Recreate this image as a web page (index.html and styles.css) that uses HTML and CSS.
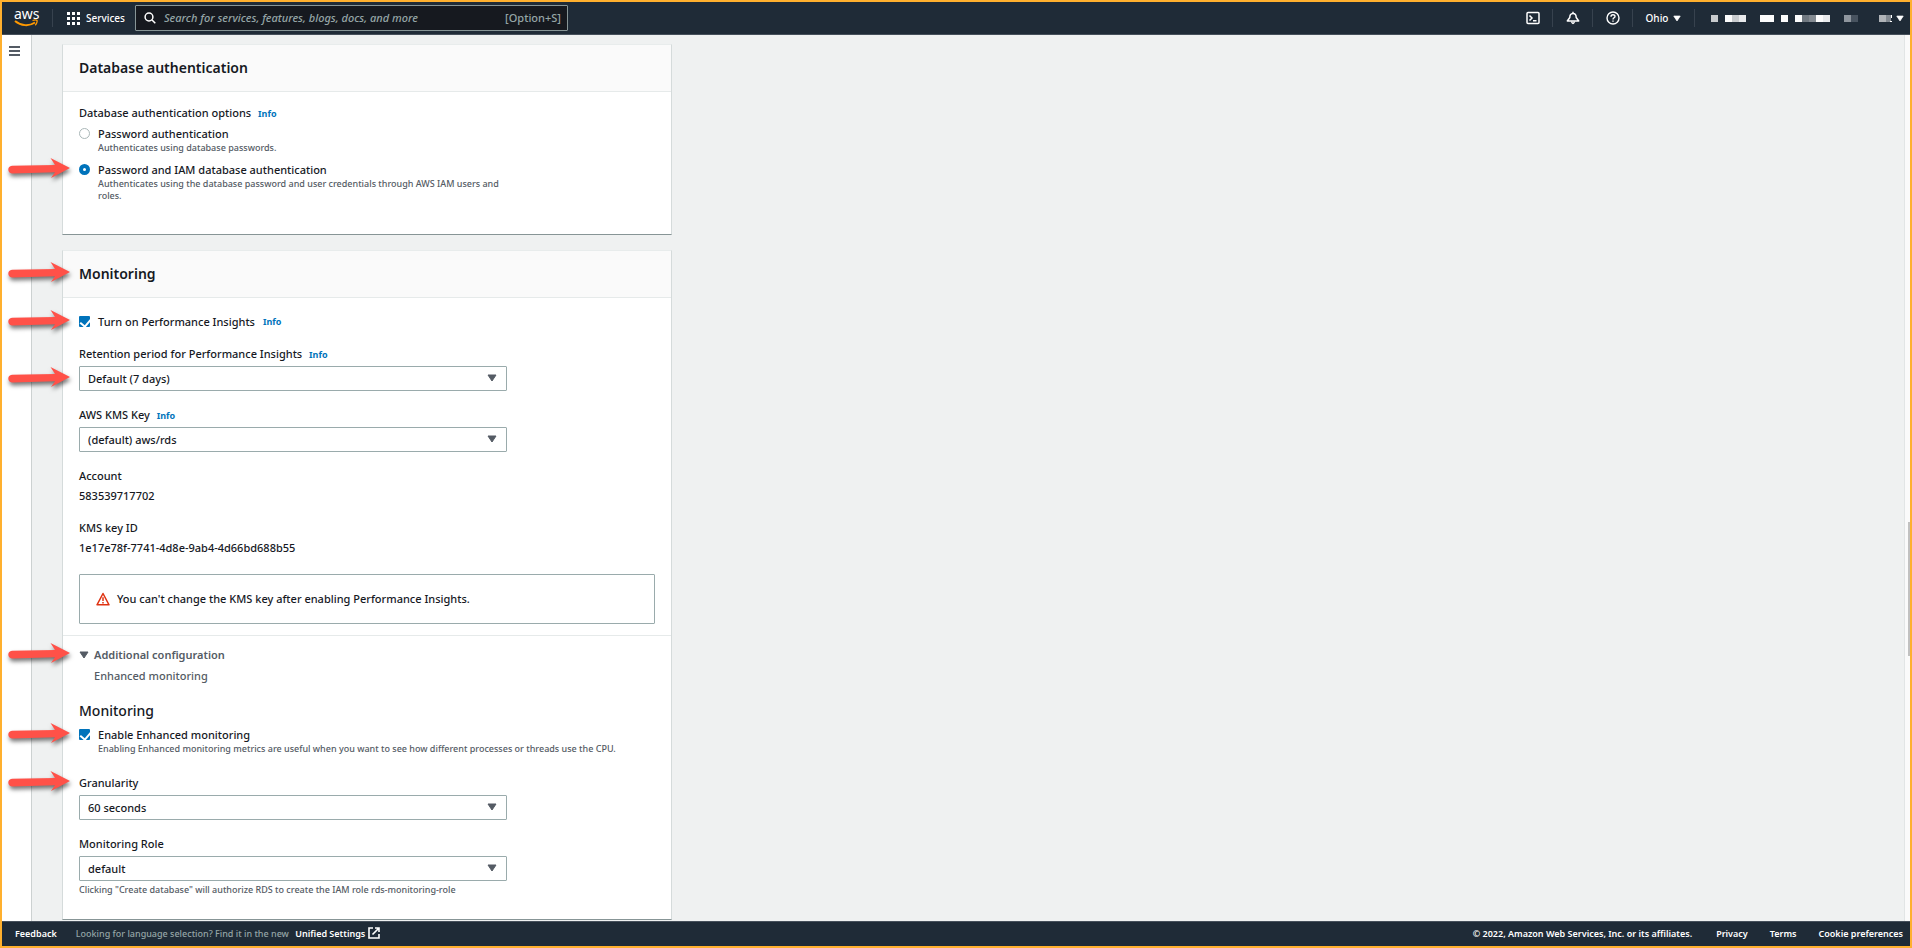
FILE: index.html
```html
<!DOCTYPE html>
<html lang="en">
<head>
<meta charset="utf-8">
<title>Create database - RDS</title>
<link rel="stylesheet" href="styles.css">
</head>
<body>
<svg class="defs" width="0" height="0" aria-hidden="true">
  <defs>
    <symbol id="arrow" viewBox="0 -1 72 32">
      <path d="M6 10.800L49 10L44.500 3L64 13L45 23L49 17.200L6 18.500Q2.300 18 2.300 14.600Q2.300 11.200 6 10.800Z" fill="#ff5148"/>
    </symbol>
    <symbol id="caret" viewBox="0 0 10 8"><path d="M1 1H9L5 7Z" fill="currentColor" stroke="currentColor" stroke-linejoin="round"/></symbol>
  </defs>
</svg>
<header class="topbar">
  <a class="logo" href="#" aria-label="AWS home">
    <span class="logo-text">aws</span>
    <svg class="logo-smile" viewBox="0 0 24 8" aria-hidden="true"><path d="M1 2C7 7 15 7.500 21 3.500" fill="none" stroke="#f90" stroke-width="2"/><path d="M18.500 1.500C20.500 .8 22.500 .8 23 1.500S22.500 5 21.200 6.300" fill="none" stroke="#f90" stroke-width="1.300"/></svg>
  </a>
  <button class="services" type="button">
    <svg width="13" height="13" viewBox="0 0 13 13" fill="#fff" aria-hidden="true"><path d="M0 0h3v3H0zM5 0h3v3H5zM10 0h3v3h-3zM0 5h3v3H0zM5 5h3v3H5zM10 5h3v3h-3zM0 10h3v3H0zM5 10h3v3H5zM10 10h3v3h-3z"/></svg>
    Services
  </button>
  <label class="search">
    <svg width="12" height="12" viewBox="0 0 12 12" fill="none" stroke="#fff" stroke-width="1.500" aria-hidden="true"><circle cx="5" cy="5" r="3.900"/><path d="M8 8L11.300 11.300"/></svg>
    <input type="search" aria-label="Search" placeholder="Search for services, features, blogs, docs, and more">
    <span>[Option+S]</span>
  </label>
  <nav class="tools">
    <button type="button" aria-label="CloudShell"><svg width="14" height="14" viewBox="0 0 14 14" fill="none" stroke="#fff" stroke-width="1.500"><rect x="1" y="1.500" width="12" height="11" rx="1"/><path d="M3.500 4.500L6 7L3.500 9.500M7 9.800H10.500"/></svg></button>
    <button type="button" aria-label="Notifications"><svg width="14" height="14" viewBox="0 0 14 14" fill="none" stroke="#fff" stroke-width="1.500" stroke-linejoin="round"><path d="M7 .8V2.500M7 2.500C4.500 2.500 3.800 4.300 3.800 6.500L1.300 10H12.700L10.200 6.500C10.200 4.300 9.500 2.500 7 2.500Z"/><path d="M5.500 10.500Q7 14.500 8.500 10.500"/></svg></button>
    <button type="button" aria-label="Help"><svg width="14" height="14" viewBox="0 0 14 14" fill="none" stroke="#fff" stroke-width="1.400"><circle cx="7" cy="7" r="6"/><path d="M5 5.700C5 3 9 3.200 9 5.400C9 6.800 7 6.800 7 8.400M7 9.400V10.800"/></svg></button>
    <button class="region" type="button">Ohio <svg width="8" height="7" aria-hidden="true"><use href="#caret"/></svg></button>
    <button class="account" type="button" aria-label="Account">
      <svg width="182" height="7" viewBox="0 0 182 7" shape-rendering="crispEdges" aria-hidden="true">
        <path fill="#fcfcfc" d="M14 0h7v7h-7zM49 0h14v7H49zM70 0h7v7h-7zM84 0h7v7h-7zM105 0h7v7h-7z"/>
        <path fill="#c8cbce" d="M0 0h7v7H0zM21 0h7v7h-7z"/><path fill="#e8eaec" d="M28 0h7v7h-7zM112 0h7v7h-7z"/>
        <path fill="#707880" d="M91 0h7v7h-7z"/><path fill="#838a91" d="M98 0h7v7h-7zM175 0h5v7h-5z"/>
        <path fill="#8f969e" d="M133 0h7v7h-7z"/><path fill="#48535f" d="M140 0h7v7h-7z"/><path fill="#b0b4b8" d="M168 0h7v7h-7z"/><path fill="#fff" d="M180 0h1v3h-1zM179 6h2v1h-2z"/>
      </svg>
      <svg width="8" height="7" aria-hidden="true"><use href="#caret"/></svg>
    </button>
  </nav>
</header>
<div class="shell">
  <aside class="rail">
    <button type="button" aria-label="Open navigation"><svg width="11" height="10" viewBox="0 0 11 10" stroke="#545b64" stroke-width="2"><path d="M0 1H11M0 5H11M0 9H11"/></svg></button>
  </aside>
  <main class="content">
    <section class="card auth">
      <header class="card-head"><h2>Database authentication</h2></header>
      <fieldset class="card-body">
        <legend class="field-label">Database authentication options <a href="#">Info</a></legend>
        <div class="choice">
          <input type="radio" name="auth" id="auth-pw">
          <label for="auth-pw">Password authentication<small>Authenticates using database passwords.</small></label>
        </div>
        <div class="choice">
          <svg class="arrow line" aria-hidden="true"><use href="#arrow"/></svg>
          <input type="radio" name="auth" id="auth-iam" checked>
          <label for="auth-iam">Password and IAM database authentication<small>Authenticates using the database password and user credentials through AWS IAM users and roles.</small></label>
        </div>
      </fieldset>
    </section>
    <section class="card">
      <header class="card-head"><svg class="arrow" aria-hidden="true"><use href="#arrow"/></svg><h2>Monitoring</h2></header>
      <div class="card-body monitoring">
        <div class="choice">
          <svg class="arrow line" aria-hidden="true"><use href="#arrow"/></svg>
          <input type="checkbox" id="insights" checked>
          <label for="insights">Turn on Performance Insights</label>
          <a href="#">Info</a>
        </div>
        <div class="field">
          <div class="field-label"><label for="retention">Retention period for Performance Insights</label> <a href="#">Info</a></div>
          <div class="select"><svg class="arrow" aria-hidden="true"><use href="#arrow"/></svg><select id="retention"><option>Default (7 days)</option></select><svg class="caret" aria-hidden="true"><use href="#caret"/></svg></div>
        </div>
        <div class="field">
          <div class="field-label"><label for="kms">AWS KMS Key</label> <a href="#">Info</a></div>
          <div class="select"><select id="kms"><option>(default) aws/rds</option></select><svg class="caret" aria-hidden="true"><use href="#caret"/></svg></div>
        </div>
        <dl class="facts">
          <div><dt>Account</dt><dd>583539717702</dd></div>
          <div><dt>KMS key ID</dt><dd>1e17e78f-7741-4d8e-9ab4-4d66bd688b55</dd></div>
        </dl>
        <div class="alert">
          <svg width="14" height="14" viewBox="0 0 14 14" fill="none" stroke="#df3312" stroke-width="1.500" aria-hidden="true"><path d="M7 1.500L13 12.800H1Z" stroke-linejoin="round"/><path d="M7 5.300V9M7 10V11.500"/></svg>
          You can't change the KMS key after enabling Performance Insights.
        </div>
      </div>
      <div class="extra">
        <div class="extra-head">
          <button type="button" aria-expanded="true"><svg class="arrow" aria-hidden="true"><use href="#arrow"/></svg><svg class="caret" aria-hidden="true"><use href="#caret"/></svg>Additional configuration</button>
          <p>Enhanced monitoring</p>
        </div>
        <h3>Monitoring</h3>
        <div class="choice">
          <svg class="arrow line" aria-hidden="true"><use href="#arrow"/></svg>
          <input type="checkbox" id="enhanced" checked>
          <label for="enhanced">Enable Enhanced monitoring<small>Enabling Enhanced monitoring metrics are useful when you want to see how different processes or threads use the CPU.</small></label>
        </div>
        <div class="field">
          <div class="field-label"><svg class="arrow" aria-hidden="true"><use href="#arrow"/></svg><label for="granularity">Granularity</label></div>
          <div class="select"><select id="granularity"><option>60 seconds</option></select><svg class="caret" aria-hidden="true"><use href="#caret"/></svg></div>
        </div>
        <div class="field">
          <div class="field-label"><label for="role">Monitoring Role</label></div>
          <div class="select"><select id="role"><option>default</option></select><svg class="caret" aria-hidden="true"><use href="#caret"/></svg></div>
          <small class="hint">Clicking "Create database" will authorize RDS to create the IAM role rds-monitoring-role</small>
        </div>
      </div>
    </section>
  </main>
  <div class="track"><div class="thumb"></div></div>
</div>
<footer class="footer">
  <a href="#">Feedback</a>
  <span class="language">Looking for language selection? Find it in the new <a href="#">Unified Settings<svg width="12" height="12" viewBox="0 0 12 12" fill="none" stroke="#fff" stroke-width="1.600" aria-hidden="true"><path d="M5 1H1V11H11V7M7 1H11V5M11 1L4.500 7.500"/></svg></a></span>
  <span class="copyright">© 2022, Amazon Web Services, Inc. or its affiliates.</span>
  <a href="#">Privacy</a>
  <a href="#">Terms</a>
  <a href="#">Cookie preferences</a>
</footer>
</body>
</html>
```
FILE: styles.css
```css
* { box-sizing: border-box; }
body {
  margin: 0;
  height: 100vh;
  display: flex;
  flex-direction: column;
  border: 2px solid #ffb02e;
  background: #eff1f1;
  color: #16191f;
  font: 500 11px/16px "Noto Sans", sans-serif;
  overflow: hidden;
}
h2, h3, p, dl, dd, fieldset { margin: 0; }
button, input, select { font: inherit; color: inherit; }
button { border: 0; background: none; padding: 0; cursor: pointer; }
a { color: #0073bb; text-decoration: none; }
small { display: block; color: #545b64; font-size: 9px; line-height: 12px; }
.defs { position: absolute; }

.topbar {
  flex: none;
  display: flex;
  align-items: center;
  height: 33px;
  background: #1f2b37;
  border-bottom: 1px solid #46505b;
  color: #fff;
}
.logo { width: 51px; padding-left: 12px; border-right: 1px solid #37424e; height: 18px; display: flex; flex-direction: column; }
.logo-text { color: #fff; font-size: 14px; font-weight: 400; line-height: 10px; }
.logo-smile { width: 24px; height: 8px; }
.services { display: flex; align-items: center; gap: 6px; margin-left: 14px; font-size: 10px; font-weight: 500; }
.search {
  display: flex;
  align-items: center;
  gap: 8px;
  width: 433px;
  height: 26px;
  margin-left: 10px;
  padding: 0 6px 0 8px;
  border: 1px solid #879596;
  border-radius: 1px;
  background: #16191f;
  color: #95a5a6;
}
.search input { flex: 1; border: 0; padding: 0; background: none; outline: 0; }
.search input::placeholder { color: #95a5a6; font-style: italic; opacity: 1; }
.tools { margin-left: auto; display: flex; align-items: center; }
.tools button { display: flex; align-items: center; justify-content: center; width: 40px; height: 18px; border-right: 1px solid #37424e; }
.tools .region { width: 62px; gap: 5px; font-size: 10px; font-weight: 500; }
.tools .account { width: 215px; border: 0; gap: 3px; justify-content: flex-end; padding-right: 6px; }

.shell { flex: 1; min-height: 0; display: flex; overflow: hidden; }
.rail { flex: none; width: 30px; background: #fff; border-right: 1px solid #ccd1d1; padding: 9px 0 0 7px; }
.content { flex: 1; min-width: 0; padding: 9px 30px 0; display: flex; flex-direction: column; gap: 15px; }
.card {
  flex: none;
  width: 100%;
  max-width: 610px;
  background: #fff;
  border: 1px solid #d5dbdb;
  border-top-color: #e8ecec;
  border-bottom-color: #879596;
}
.card-head { position: relative; padding: 12px 16px; background: #fafafa; border-bottom: 1px solid #e6eaea; }
.card-head h2 { font-size: 14px; line-height: 22px; font-weight: 600; }
.card-body { border: 0; padding: 16px 16px 11px; }
.auth .card-body { padding: 0 16px 32px; }
.field-label { position: relative; padding: 0; line-height: 16px; }
.auth .field-label { padding: 13px 0 5px; }
.field-label a { margin-left: 4px; font-size: 9px; line-height: 12px; font-weight: 700; }
.choice { position: relative; display: flex; align-items: flex-start; }
.choice a { margin-left: 8px; font-size: 9px; font-weight: 700; }
.choice + .choice { margin-top: 8px; }
.choice label { max-width: 560px; }
.auth .choice label { max-width: 426px; }
.choice input {
  flex: none;
  appearance: none;
  width: 11px;
  height: 11px;
  margin: 2px 8px 0 0;
  border: 1px solid #aab7b8;
  background: #fff;
}
.choice input[type="radio"] { border-radius: 50%; }
.choice input[type="radio"]:checked { border: 4px solid #0073bb; }
.choice input[type="checkbox"] { border: 0; border-radius: 1px; background: #0073bb; position: relative; }
.choice input[type="checkbox"]::after {
  content: "";
  position: absolute;
  left: 3px;
  top: 1px;
  width: 5px;
  height: 8px;
  border: solid #fff;
  border-width: 0 2px 2px 0;
  transform: rotate(40deg);
}
.select { position: relative; width: 428px; max-width: 100%; margin-top: 4px; }
.select select { display: block; appearance: none; width: 100%; height: 25px; padding: 0 8px; border: 1px solid #9aabac; border-radius: 1px; background: #fff; }
.caret { width: 10px; height: 8px; color: #545b64; }
.select .caret { position: absolute; right: 10px; top: 8px; pointer-events: none; }
.monitoring { display: flex; flex-direction: column; gap: 16px; }
.facts { display: flex; flex-direction: column; gap: 16px; }
.facts dd { margin-top: 4px; }
.alert { display: flex; align-items: center; gap: 7px; margin-top: 2px; padding: 16px; border: 1px solid #9aabac; border-radius: 1px; }
.extra { border-top: 1px solid #e6eaea; padding: 11px 16px 23px; }
.extra-head { color: #545b64; }
.extra-head button { position: relative; display: flex; align-items: center; gap: 5px; font-weight: 600; }
.extra-head p { margin: 5px 0 0 15px; }
.extra h3 { margin: 17px 0 6px; font-size: 14px; line-height: 20px; font-weight: 500; }
.extra .field { margin-top: 16px; }
.extra .choice + .field { margin-top: 20px; }
.hint { margin-top: 3px; }
.arrow { position: absolute; left: -73px; top: calc(50% - 16px); width: 72px; height: 32px; filter: drop-shadow(1px 3px 2px #0008); pointer-events: none; }
.card-head .arrow { left: -57px; }
.arrow.line { top: -8px; }

.track { flex: none; width: 6px; padding-top: 487px; background: #fafafa; border-left: 1px solid #e2e5e5; }
.thumb { width: 2px; height: 134px; margin-left: auto; background: #c1c1c1; }
.footer {
  flex: none;
  display: flex;
  align-items: center;
  height: 25px;
  padding: 0 7px 0 13px;
  background: #1f2b37;
  border-top: 1px solid #46505b;
  color: #fff;
  font-size: 9px;
  font-weight: 600;
}
.footer a { color: #fff; margin-right: 22px; }
.footer a:last-child { margin-right: 0; }
.footer .language { color: #95a5a6; font-weight: 500; margin-left: -3px; }
.footer .language a { font-weight: 600; margin: 0 0 0 4px; }
.language svg { margin-left: 3px; vertical-align: -2px; }
.copyright { margin: 0 24px 0 auto; }
```
